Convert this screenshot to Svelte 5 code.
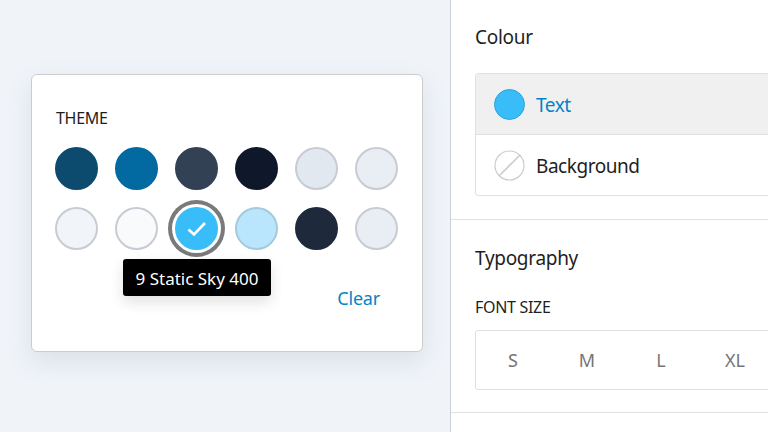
<script>
  const swatches = [
    { color: '#0c4a6e', border: '#0c4a6e' },
    { color: '#0369a1', border: '#0369a1' },
    { color: '#334155', border: '#334155' },
    { color: '#0f172a', border: '#0f172a' },
    { color: '#e2e8f0', border: '#c8ccd2' },
    { color: '#e9eef5', border: '#c8ccd2' },
    { color: '#f1f5f9', border: '#c8ccd2' },
    { color: '#f8fafc', border: '#c8ccd2' },
    { color: '#38bdf8', border: '#38bdf8', selected: true, name: '9 Static Sky 400' },
    { color: '#bae6fd', border: '#a5c9dd' },
    { color: '#1e293b', border: '#1e293b' },
    { color: '#e9eef5', border: '#c8ccd2' }
  ];
  const sizes = ['S', 'M', 'L', 'XL'];
</script>

<div class="page">
  <div class="canvas">
    <div class="card">
      <div class="label">THEME</div>
      <div class="grid">
        {#each swatches as s}
          <div class="cell">
            <button class="swatch" class:selected={s.selected} style="background:{s.color};border-color:{s.border}">
              {#if s.selected}
                <svg width="20" height="16" viewBox="0 0 20 16">
                  <path d="M1.5 8.5 L7 13.5 L18 2" fill="none" stroke="#fff" stroke-width="2.6" />
                </svg>
              {/if}
            </button>
            {#if s.selected}
              <div class="tooltip">{s.name}</div>
            {/if}
          </div>
        {/each}
      </div>
      <div class="actions"><button class="clear">Clear</button></div>
    </div>
  </div>

  <aside class="panel">
    <section class="colour">
      <h2>Colour</h2>
      <div class="list">
        <div class="row active">
          <span class="dot"></span>
          <span class="name">Text</span>
        </div>
        <div class="row">
          <svg width="31" height="31" viewBox="0 0 31 31">
            <circle cx="15.5" cy="15.5" r="14.5" fill="#fff" stroke="#ccc" stroke-width="1.2" />
            <line x1="5.2" y1="25.8" x2="25.8" y2="5.2" stroke="#ccc" stroke-width="1.6" />
          </svg>
          <span class="name">Background</span>
        </div>
      </div>
    </section>
    <section class="typography">
      <h2>Typography</h2>
      <div class="label">FONT SIZE</div>
      <div class="sizes">
        {#each sizes as size}
          <button class="size">{size}</button>
        {/each}
      </div>
    </section>
  </aside>
</div>

<style>
  :global(body) {
    margin: 0;
    font-family: "Noto Sans", "Open Sans", sans-serif;
    color: #1e1e1e;
  }

  button {
    font: inherit;
    padding: 0;
    border: none;
    background: none;
  }

  .page {
    display: flex;
    width: 768px;
    height: 432px;
    overflow: hidden;
  }

  .canvas {
    flex: none;
    box-sizing: border-box;
    width: 450px;
    padding: 74px 27px 0 31px;
    background: #f0f4f9;
  }

  .card {
    box-sizing: border-box;
    height: 278px;
    padding: 33px 24px 0;
    background: #fff;
    border: 1px solid #ccc;
    border-radius: 6px;
    box-shadow: 0 10px 25px rgba(100, 116, 139, 0.15);
  }

  .label {
    font-size: 16px;
    line-height: 20px;
    color: #1e1e1e;
    letter-spacing: -0.3px;
  }

  .grid {
    display: grid;
    grid-template-columns: repeat(6, 42px);
    grid-auto-rows: 42px;
    gap: 18px;
    margin-top: 19px;
  }

  .cell {
    position: relative;
  }

  .swatch {
    display: flex;
    align-items: center;
    justify-content: center;
    box-sizing: border-box;
    width: 43px;
    height: 43px;
    margin-left: -1px;
    border: 2px solid;
    border-radius: 50%;
  }

  .swatch.selected {
    box-shadow: 0 0 0 3px #fff, 0 0 0 7px #7a7a7a;
  }

  .tooltip {
    position: absolute;
    top: 52px;
    left: -53px;
    box-sizing: border-box;
    width: 148px;
    height: 37px;
    padding-top: 2px;
    border-radius: 3px;
    background: #000;
    color: #fff;
    font-size: 17px;
    line-height: 35px;
    text-align: center;
    white-space: nowrap;
    box-shadow: 0 6px 14px rgba(0, 0, 0, 0.12);
  }

  .actions {
    display: flex;
    justify-content: flex-end;
    margin-top: 37px;
    padding-right: 18px;
  }

  .clear {
    color: #0284c7;
    font-size: 18px;
    line-height: 24px;
    letter-spacing: -0.2px;
  }

  .panel {
    flex: none;
    box-sizing: border-box;
    width: 318px;
    background: #fff;
    border-left: 1px solid #cbd0d8;
  }

  section {
    padding-left: 24px;
    border-bottom: 1px solid #e0e0e0;
  }

  .colour {
    height: 220px;
    box-sizing: border-box;
    padding-top: 24px;
  }

  .typography {
    height: 193px;
    box-sizing: border-box;
    padding-top: 25px;
  }

  h2 {
    margin: 0;
    font-size: 19px;
    font-weight: 400;
    line-height: 26px;
    letter-spacing: -0.3px;
  }

  .list {
    box-sizing: border-box;
    width: 320px;
    margin-top: 23px;
    border: 1px solid #e0e0e0;
    border-radius: 3px;
  }

  .row {
    display: flex;
    align-items: center;
    gap: 11px;
    height: 60px;
    padding-left: 18px;
    font-size: 19px;
    letter-spacing: -0.45px;
  }

  .name {
    padding-top: 2px;
  }

  .row + .row {
    border-top: 1px solid #e0e0e0;
  }

  .row.active {
    background: #f0f0f0;
    color: #0284c7;
  }

  .dot {
    box-sizing: border-box;
    width: 31px;
    height: 31px;
    border: 1px solid #2ea3dc;
    border-radius: 50%;
    background: #38bdf8;
  }

  .typography .label {
    margin-top: 26px;
  }

  .sizes {
    display: flex;
    box-sizing: border-box;
    width: 320px;
    height: 60px;
    margin-top: 13px;
    border: 1px solid #e0e0e0;
    border-radius: 3px;
  }

  .size {
    width: 74px;
    color: #757575;
    font-size: 18px;
  }
</style>
